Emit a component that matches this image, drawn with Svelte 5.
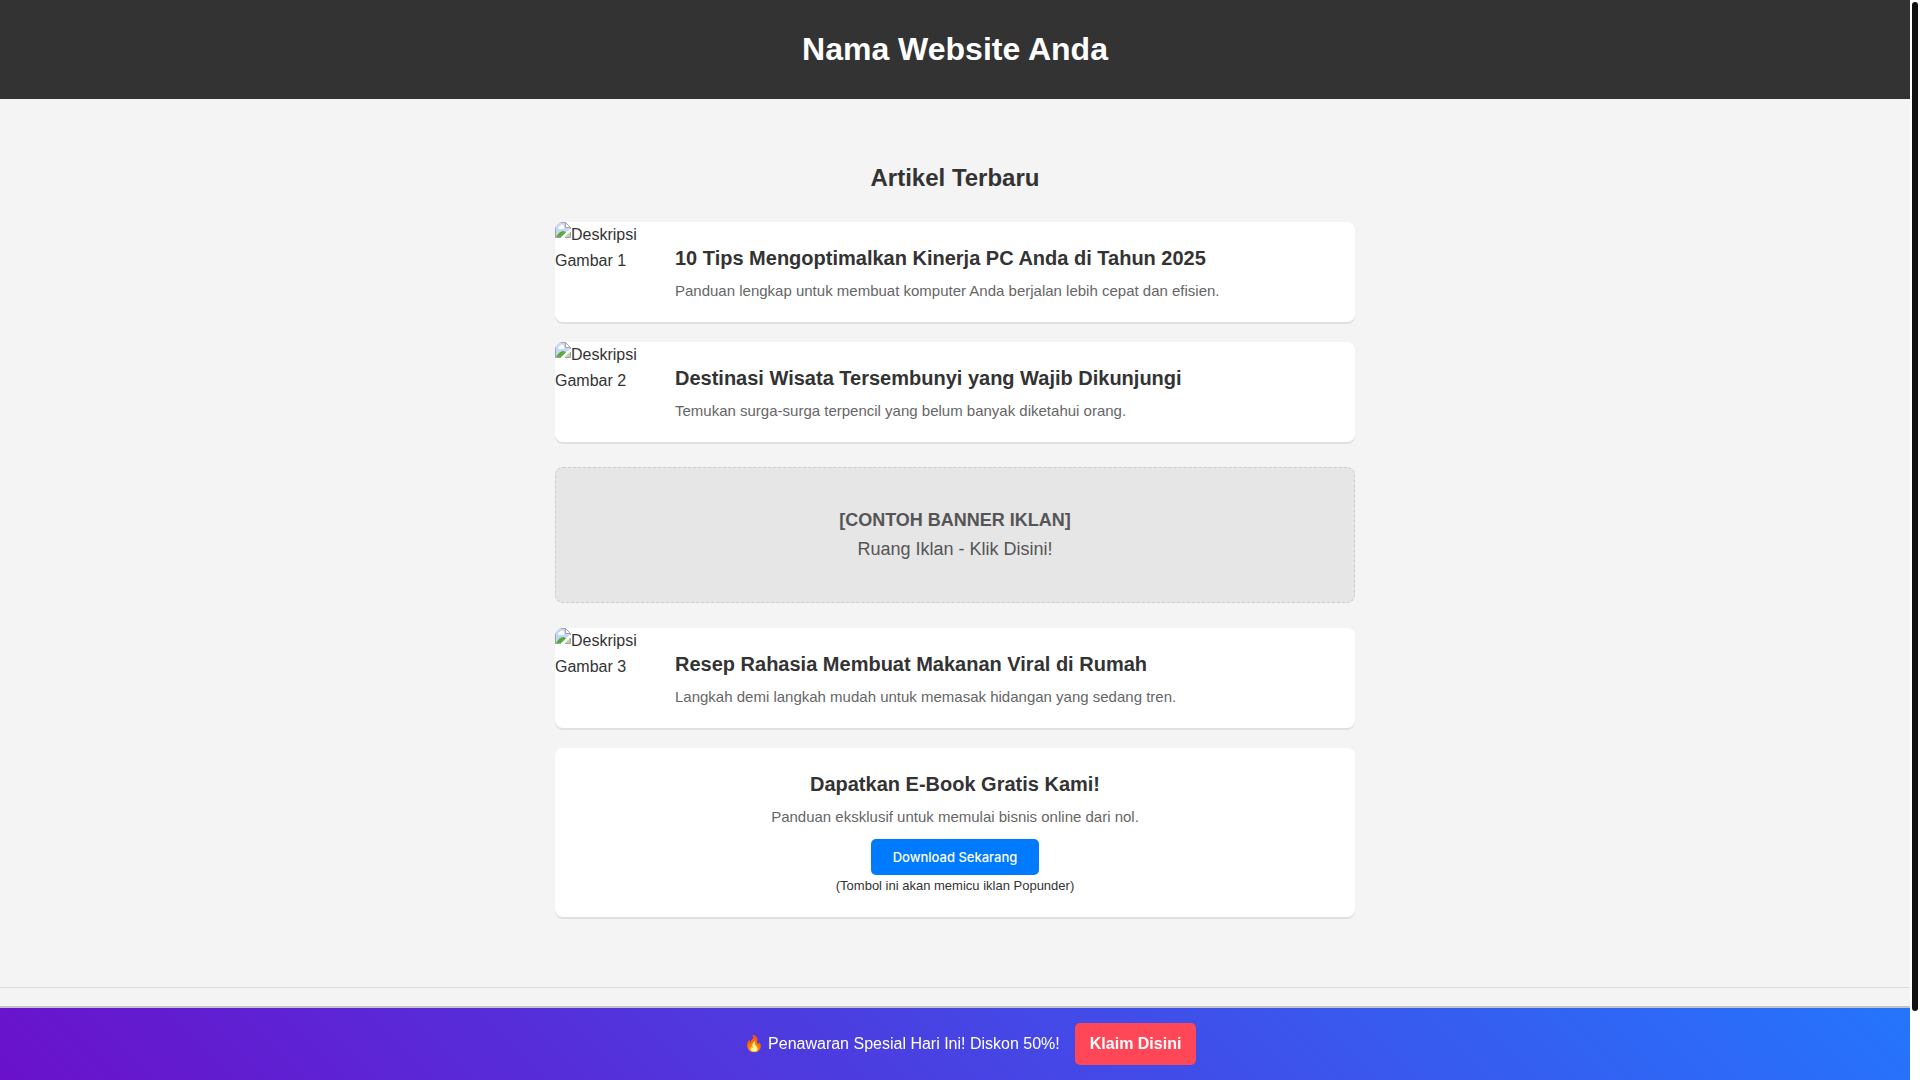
<script lang="ts">
	type Article = { title: string; summary: string; alt: string };

	const articles: Article[] = [
		{
			title: '10 Tips Mengoptimalkan Kinerja PC Anda di Tahun 2025',
			summary: 'Panduan lengkap untuk membuat komputer Anda berjalan lebih cepat dan efisien.',
			alt: 'Deskripsi Gambar 1'
		},
		{
			title: 'Destinasi Wisata Tersembunyi yang Wajib Dikunjungi',
			summary: 'Temukan surga-surga terpencil yang belum banyak diketahui orang.',
			alt: 'Deskripsi Gambar 2'
		},
		{
			title: 'Resep Rahasia Membuat Makanan Viral di Rumah',
			summary: 'Langkah demi langkah mudah untuk memasak hidangan yang sedang tren.',
			alt: 'Deskripsi Gambar 3'
		}
	];
</script>

{#snippet card(article: Article)}
	<article class="card">
		<div class="thumb">
			<svg class="broken" viewBox="0 0 16 16" aria-hidden="true">
				<path d="M0 0H11L16 5V16H0Z" fill="#fff" />
				<path d="M1 1H10V6H15V7L6 15H1Z" fill="#c3d7fb" />
				<path d="M3 6a2 2 0 0 1 2-2 2 2 0 0 1 4 1 1.5 1.5 0 0 1 0 2H4Z" fill="#fff" />
				<path d="M1 15C3 11 6 9 8 9s3 1 3 2L7 15Z" fill="#57ad38" />
				<path d="M16 6V8L8 16H5Z" fill="#fff" />
				<path d="M15 10V15H10Z" fill="#b7d3a7" />
				<path d="M.5 16V.5H10.5L15.5 5.5V7M10.5 .5V5.5H15.5M15.5 10V15.5H10M0 15.5H6" fill="none" stroke="#a3a3a3" />
			</svg>
			{article.alt}
		</div>
		<div class="card-body">
			<h3>{article.title}</h3>
			<p>{article.summary}</p>
		</div>
	</article>
{/snippet}

<div class="page">
	<header>
		<h1>Nama Website Anda</h1>
	</header>

	<main>
		<h2>Artikel Terbaru</h2>

		{@render card(articles[0])}
		{@render card(articles[1])}

		<div class="ad-banner">
			<strong>[CONTOH BANNER IKLAN]</strong>
			<span>Ruang Iklan - Klik Disini!</span>
		</div>

		{@render card(articles[2])}

		<section class="ebook">
			<h3>Dapatkan E-Book Gratis Kami!</h3>
			<p>Panduan eksklusif untuk memulai bisnis online dari nol.</p>
			<button type="button">Download Sekarang</button>
			<small>(Tombol ini akan memicu iklan Popunder)</small>
		</section>
	</main>

	<footer></footer>
</div>

<div class="sticky-ad">
	<span>🔥 Penawaran Spesial Hari Ini! Diskon 50%!</span>
	<a href="#klaim">Klaim Disini</a>
</div>

<div class="scroll-track" aria-hidden="true">
	<div class="scroll-thumb"></div>
</div>

<style>
	:global(body) {
		margin: 0;
		background: #f4f4f4;
		color: #333;
		font-family: 'Liberation Sans', Arial, sans-serif;
		font-size: 16px;
		line-height: 26px;
	}

	.page {
		padding-right: 10px;
	}

	header {
		background: #333;
		color: #fff;
		padding: 24px 20px;
		text-align: center;
	}

	h1,
	h2,
	h3,
	p {
		margin: 0;
	}

	h1 {
		font-size: 32px;
		line-height: 51px;
	}

	main {
		max-width: 800px;
		margin: 0 auto;
		padding: 60px 20px 50px;
	}

	h2 {
		margin-bottom: 25px;
		font-size: 24px;
		line-height: 38px;
		text-align: center;
	}

	h3 {
		font-size: 20px;
		line-height: 32px;
	}

	p {
		margin-top: 5px;
		color: #666;
		font-size: 15px;
		line-height: 24px;
	}

	.card,
	.ebook {
		margin-bottom: 20px;
		background: #fff;
		border-radius: 8px;
		box-shadow: 0 2px 0 #e0e0e0;
		overflow: hidden;
	}

	.card {
		display: flex;
	}

	.thumb {
		flex: none;
		width: 100px;
		height: 100px;
	}

	.broken {
		float: left;
		width: 16px;
		height: 16px;
	}

	.card-body {
		flex: 1;
		align-self: center;
		padding: 0 20px;
	}

	.ad-banner {
		display: flex;
		flex-direction: column;
		margin: 25px 0;
		padding: 38px 20px;
		background: #e6e6e6;
		border: 1px dashed #ccc;
		border-radius: 8px;
		color: #555;
		font-size: 18px;
		line-height: 29px;
		text-align: center;
	}

	.ebook {
		display: flex;
		flex-direction: column;
		align-items: center;
		padding: 20px;
		text-align: center;
	}

	.ebook button {
		margin-top: 10px;
		padding: 10px 22px;
		border: none;
		border-radius: 5px;
		background: #007bff;
		color: #fff;
		font-family: Inter, sans-serif;
		font-size: 13px;
		font-weight: 500;
		line-height: 16px;
		cursor: pointer;
	}

	.ebook small {
		font-size: 13px;
		line-height: 22px;
	}

	footer {
		min-height: 60px;
		border-top: 1px solid #ddd;
	}

	.sticky-ad {
		position: fixed;
		right: 10px;
		bottom: 0;
		left: 0;
		display: flex;
		align-items: center;
		justify-content: center;
		gap: 15px;
		padding: 15px 0 15px 30px;
		background: linear-gradient(45deg, #6a11cb, #2575fc);
		box-shadow: 0 -2px 0 #c3c3c3;
		color: #fff;
	}

	.sticky-ad a {
		padding: 8px 15px;
		border-radius: 5px;
		background: #ff4757;
		color: #fff;
		font-weight: bold;
		text-decoration: none;
	}

	.scroll-track {
		position: fixed;
		top: 0;
		right: 0;
		bottom: 0;
		width: 6px;
		padding: 2px;
		background: #fff;
	}

	.scroll-thumb {
		height: calc(94% - 2px);
		border-radius: 3px;
		background: #111;
	}
</style>
